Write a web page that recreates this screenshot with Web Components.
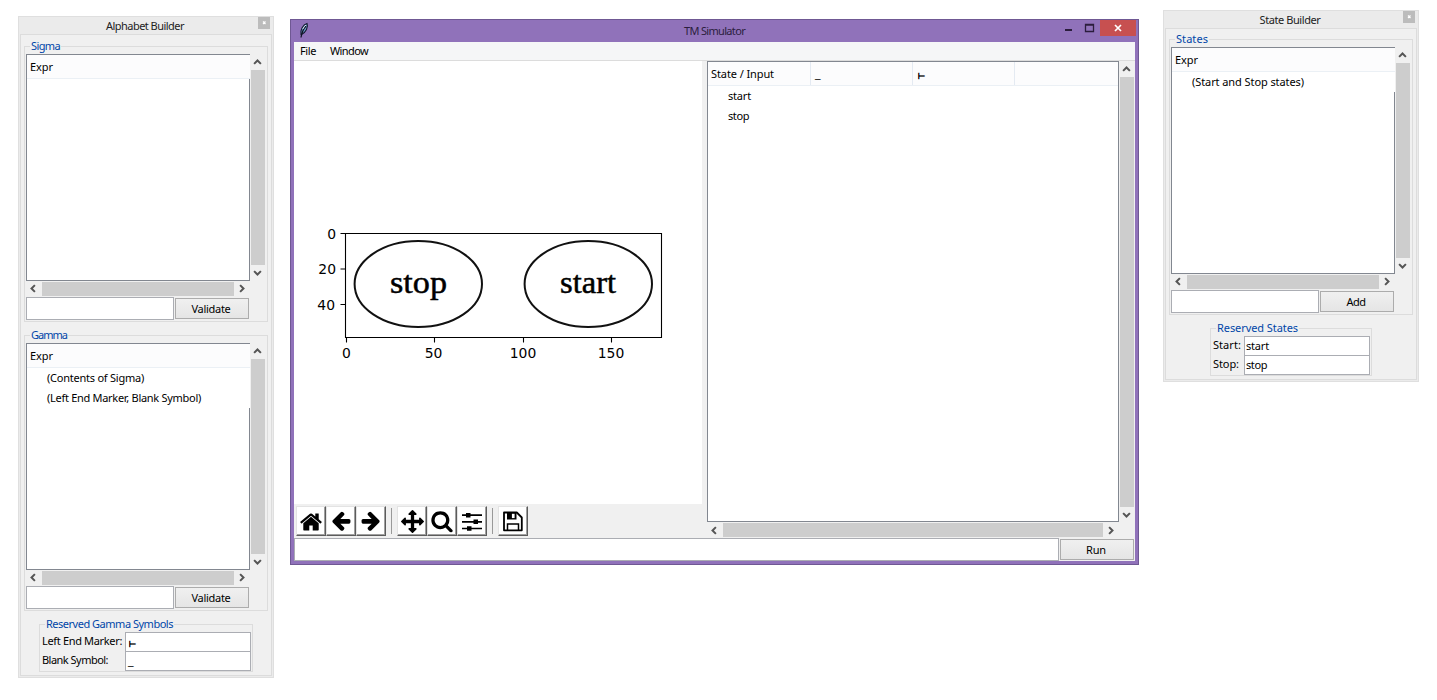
<!DOCTYPE html>
<html lang="en">
<head>
<meta charset="utf-8">
<title>TM Simulator</title>
<style>
html,body{margin:0;padding:0;background:#fff}
body{width:1437px;height:700px;overflow:hidden;font-family:"Noto Sans","DejaVu Sans",sans-serif;font-size:11px;color:#000}
</style>
</head>
<body>
<tm-desktop></tm-desktop>
<script>
const define = (name, html, init) => customElements.define(name, class extends HTMLElement {
  constructor(){ super(); this.attachShadow({mode:'open'}); }
  connectedCallback(){
    this.shadowRoot.innerHTML = typeof html === 'function' ? html(this) : html;
    if (init) init(this);
  }
});
const attr = (el, n, d='') => el.getAttribute(n) ?? d;

/* Label whose tracking is adjusted so that it takes exactly `w` pixels. */
define('fit-text', `<style>:host{display:block;line-height:14px;white-space:pre}span{display:inline-block}</style><span><slot></slot></span>`, el => {
  const s = el.shadowRoot.querySelector('span'), w = +attr(el,'w',0);
  if (w) {
    const n = el.textContent.length;
    s.style.letterSpacing = ((w - s.getBoundingClientRect().width) / n) + 'px';
  }
});

define('scroll-bar', el => {
  const v = attr(el,'dir') === 'v';
  const d = v ? ['M3.1 8.900 6.500 5.500l3.400 3.400','M3.100 6.100 6.500 9.500 9.900 6.100'] : ['M7.900 4.100 4.500 7.500l3.400 3.400','M5.100 4.100 8.500 7.500 5.100 10.900'];
  const a = p => v ? `<svg width="14" height="15" viewBox="0 0 14 15"><path d="${p}" fill="none" stroke="#555" stroke-width="2"/></svg>`
    : `<svg width="16" height="15" viewBox="-1 0 16 15"><path d="${p}" fill="none" stroke="#555" stroke-width="2"/></svg>`;
  return `<style>:host{display:flex;flex-direction:${v?'column':'row'};align-items:${v?'flex-start':'center'};background:#f0f0f0;box-sizing:border-box;${v?'padding:1px 0 0 1px':''}}
  svg{display:block;flex:none}i{flex:1;background:#cdcdcd;${v?'width:14px':'height:14px'}}</style>${a(d[0])}<i></i>${a(d[1])}`;
});

define('text-entry', `<style>:host{display:flex;align-items:center;box-sizing:border-box;background:#fff;border:1px solid #abadb3;padding-left:1px;overflow:hidden}</style><slot></slot>`);
define('push-button', `<style>:host{display:flex;align-items:center;justify-content:center;box-sizing:border-box;border:1px solid #acacac;padding-right:2px;background:linear-gradient(#f0f0f0,#e5e5e5)}</style><slot></slot>`);

define('list-box', `<style>:host{display:flex;flex-direction:column;box-sizing:border-box;background:#fff;border:solid #828790;border-width:1px 0 1px 1px}
.h{height:23px;border-bottom:1px solid #ebf0f5;background:#fcfcfd;display:flex;align-items:center;padding-left:3px}
.f{flex:1;border-right:1px solid #828790}</style><div class="h"><fit-text w="23">Expr</fit-text></div><slot></slot><div class="f"></div>`);
define('list-row', `<style>:host{display:flex;height:20px;align-items:center;padding-left:20px}</style><slot></slot>`);

define('group-box', el => `<style>:host{display:block;box-sizing:border-box;border:1px solid #dcdcdc;position:relative}
.l{position:absolute;left:${attr(el,'lx','5')}px;top:-8px;background:#f0f0f0;padding:0 1px;color:#0046a8}</style>
<fit-text class="l" w="${attr(el,'lw')}">${attr(el,'label')}</fit-text><slot></slot>`);

/* A list with scroll bars and the entry row beneath it. */
define('expr-editor', el => `<style>:host{display:block}
group-box{height:276px;padding:7px 0 0 1px}
.g{display:grid;grid-template-columns:224px 16px;grid-template-rows:227px 16px}
.r{display:flex;gap:1px;align-items:center}
text-entry{width:148px;height:23px}push-button{width:74px;height:21px}
scroll-bar[dir=v]{width:16px;height:226px}
scroll-bar[dir=h]{width:224px;height:15px}</style>
<group-box label="${attr(el,'label')}" lw="${attr(el,'lw')}"><div class="g"><list-box><slot></slot></list-box><scroll-bar dir="v"></scroll-bar><scroll-bar dir="h"></scroll-bar></div>
<div class="r"><text-entry></text-entry><push-button><fit-text w="${attr(el,'bw')}">${attr(el,'button')}</fit-text></push-button></div></group-box>`);

define('tool-window', el => `<style>:host{display:block;box-sizing:border-box;width:256px;background:#ebebeb;border:1px solid #dfdfdf;padding:0 1px 1px;position:relative}
.t{height:${attr(el,'th','17')}px;display:flex;align-items:center;justify-content:center;color:#222;padding-right:2px}
.c{position:absolute;right:3px;top:0;width:12px;height:12px;background:#bcbcbc;display:grid;place-items:center}
.c svg{display:block}
.b{box-sizing:border-box;height:${attr(el,'bh')}px;background:#f0f0f0;border:1px solid #dcdcdc;padding:${attr(el,'pt','11')}px 0 0 3px}</style>
<div class="t"><fit-text w="${attr(el,'tw')}">${attr(el,'name')}</fit-text></div><div class="c"><svg width="12" height="12"><path d="M5 4.500l2.500 2.500m0-2.500l-2.500 2.500" stroke="#fff" stroke-width="1.200"/></svg></div>
<div class="b"><slot></slot></div>`);

define('reserved-field', el => `<style>:host{display:flex;height:19px}
.l{flex:none;width:${attr(el,'lwid')}px;padding-top:2px}.l fit-text{margin-left:-1px}text-entry{width:126px;height:20px}</style>
<div class="l"><fit-text w="${attr(el,'w')}">${attr(el,'label')}</fit-text></div><text-entry><slot></slot></text-entry>`);

/* End-marker and blank glyphs, set smaller and lower than the labels. */
define('left-mark', `<style>:host{display:block;font:8.500px/14px "DejaVu Sans",sans-serif;padding:4px 0 0 2px;-webkit-text-stroke:.5px #000}</style>⊢`);
define('blank-mark', `<style>:host{display:block;line-height:14px;font-family:"DejaVu Sans",sans-serif;padding-left:1px}</style>_`);

const ICONS = {
 home:[24,0,1,'<path d="M1472 992v480q0 26-19 45t-45 19h-384v-384h-256v384h-384q-26 0-45-19t-19-45v-480q0-1 .5-3t.5-3l575-474 575 474q1 2 1 6zm223-69l-62 74q-8 9-21 11h-3q-13 0-21-7l-692-577-692 577q-12 8-24 7-13-2-21-11l-62-74q-8-10-7-23.5t11-21.5l719-599q32-26 76-26t76 26l244 204v-195q0-14 9-23t23-9h192q14 0 23 9t9 23v408l219 182q10 8 11 21.5t-7 23.5z"/>'],
 back:[22,0,-.5,'<path d="M1664 896v128q0 53-32.5 90.5t-84.5 37.5h-704l293 294q38 36 38 90t-38 90l-75 76q-37 37-90 37-52 0-91-37l-651-652q-37-37-37-90 0-52 37-91l651-650q38-38 91-38 52 0 90 38l75 74q38 38 38 91t-38 91l-293 293h704q52 0 84.5 37.5t32.5 90.5z"/>'],
 forward:[22,0,-.5,'<path transform="translate(1792 0) scale(-1 1)" d="M1664 896v128q0 53-32.5 90.5t-84.5 37.5h-704l293 294q38 36 38 90t-38 90l-75 76q-37 37-90 37-52 0-91-37l-651-652q-37-37-37-90 0-52 37-91l651-650q38-38 91-38 52 0 90 38l75 74q38 38 38 91t-38 91l-293 293h704q52 0 84.5 37.5t32.5 90.5z"/>'],
 pan:[23,0,0,'<path d="M1792 896q0 26-19 45l-256 256q-19 19-45 19t-45-19-19-45v-128h-384v384h128q26 0 45 19t19 45-19 45l-256 256q-19 19-45 19t-45-19l-256-256q-19-19-19-45t19-45 45-19h128v-384h-384v128q0 26-19 45t-45 19-45-19l-256-256q-19-19-19-45t19-45l256-256q19-19 45-19t45 19 19 45v128h384v-384h-128q-26 0-45-19t-19-45 19-45l256-256q19-19 45-19t45 19l256 256q19 19 19 45t-19 45-45 19h-128v384h384v-128q0-26 19-45t45-19 45 19l256 256q19 19 19 45z"/>'],
 zoom:[23,-.5,-.5,'<path d="M1216 832q0-185-131.5-316.5t-316.5-131.5-316.5 131.5-131.5 316.5 131.5 316.5 316.5 131.5 316.5-131.5 131.5-316.5zm512 832q0 52-38 90t-90 38q-54 0-90-38l-343-342q-179 124-399 124-143 0-273.5-55.5t-225-150-150-225-55.5-273.5 55.5-273.5 150-225 225-150 273.5-55.5 273.5 55.5 225 150 150 225 55.5 273.5q0 220-124 399l343 343q37 37 37 90z"/>']
};
define('tool-button', el => {
  const k = attr(el,'icon'); let s;
  if (ICONS[k]) { const [z,x,y,p] = ICONS[k]; s = `<svg style="transform:translate(${x}px,${y}px)" width="${z}" height="${z}" viewBox="0 0 1792 1792">${p}</svg>`; }
  else if (k === 'sliders') s = `<svg width="24" height="24" viewBox="0 0 24 24"><path d="M2 6.200h20M2 12.800h20M2 19.500h20" stroke="#000" stroke-width="1.700"/><path d="M6 4h4.500v4.500H6zM13.500 10.500H18V15h-4.500zM7 17.300h4.500v4.500H7z"/></svg>`;
  else s = `<svg width="24" height="24" viewBox="0 0 24 24"><path d="M3 3.500h12.800l5 5v12.800H3z" fill="none" stroke="#000" stroke-width="1.800" stroke-linejoin="round"/><path d="M6 3.500h9.500v7H6z"/><path d="M10.900 4.800h2.700v4.300h-2.700z" fill="#fff"/><path d="M6.500 21v-6h11v6" fill="none" stroke="#000" stroke-width="1.500"/></svg>`;
  return `<style>:host{display:grid;place-items:center;box-sizing:border-box;width:30px;height:30px;background:#fff;border:1px solid;border-color:#e3e3e3 #5c5c5c #5c5c5c #e3e3e3;box-shadow:inset -1px -1px #a0a0a0}svg{display:block}</style>${s}`;
});

define('state-plot', `<style>:host{display:block;background:#fff}svg{display:block}.t{font:13.9px "DejaVu Sans",sans-serif}.s{font:32px "Liberation Serif",serif}</style>
<svg width="408" height="443" viewBox="294 61 408 443">
<path d="M345.500 233.500h316v104h-316zM340.500 233.500h5M340.500 269h5M340.500 304.500h5M346.500 337.500v5M434.500 337.500v5M523.500 337.500v5M611.500 337.500v5" fill="none" stroke="#000" stroke-width="1.1"/>
<g fill="none" stroke="#111" stroke-width="2"><ellipse cx="418.300" cy="284" rx="63.700" ry="43"/><ellipse cx="588.300" cy="284" rx="63.700" ry="43"/></g>
<g class="t" text-anchor="end"><text x="336" y="239">0</text><text x="336" y="274">20</text><text x="335" y="309.500">40</text></g>
<g class="t" text-anchor="middle"><text x="346.500" y="358">0</text><text x="433.500" y="358">50</text><text x="523" y="358">100</text><text x="611" y="358">150</text></g>
<g class="s" stroke="#000" stroke-width=".5"><text x="390" y="293" textLength="57" lengthAdjust="spacingAndGlyphs">stop</text><text x="560" y="293" textLength="56" lengthAdjust="spacingAndGlyphs">start</text></g></svg>`);

define('transition-table', `<style>:host{display:flex;flex-direction:column;box-sizing:border-box;background:#fff;border:1px solid #828790}
.h{height:23px;display:grid;grid-template-columns:103px 102px 102px 1fr;border-bottom:1px solid #ebf0f5;background:#fcfcfd}
.h div{display:flex;align-items:center;border-right:1px solid #e4eaf2;padding-left:3px}.h div:last-child{border:0}</style>
<div class="h"><div><fit-text w="63">State / Input</fit-text></div><div><blank-mark></blank-mark></div><div><left-mark></left-mark></div><div></div></div><slot></slot>`);

define('main-window', `<style>
:host{display:block;box-sizing:border-box;width:849px;height:546px;background:#9072ba;border:1px solid #6f5893;padding:0 3px 3px}
.t{height:22px;display:grid;grid-template-columns:1fr auto 1fr;align-items:center;color:#2b1d3d}
.t>svg{margin-left:4px;display:block}
.w{display:flex;justify-content:flex-end;height:22px;align-items:flex-start;margin-right:-1px}
.x{width:36px;height:16px;background:#c75050;display:grid;place-items:center}
.w svg{display:block}
.m{height:18px;background:#f5f6f7;border-bottom:1px solid #dcdcdc;display:flex;align-items:center;padding-left:6px;gap:14px}
.c{height:477px;display:grid;grid-template-columns:413px 412px 16px;background:#f0f0f0}
state-plot{width:408px;height:443px}
.b{display:flex;padding:2px 0 0 2px}.b i{width:1px;height:26px;background:#999;margin:2px 5px}
.g{height:461px}
scroll-bar[dir=v]{width:15px;height:461px}scroll-bar[dir=h]{height:16px;width:412px}
.r{display:flex;gap:1px;align-items:center;background:#f0f0f0;height:23px}
.r text-entry{width:765px;height:23px}.r push-button{width:74px;height:21px}
</style>
<div class="t"><svg width="12" height="18" viewBox="0 0 12 18"><path d="M3 12.500C2 8 5 2.500 9 1.500 10.500 5 8 10.500 3.500 12.500z" fill="#6f9fce" stroke="#14182c" stroke-width="1.100"/><path d="M8 4Q4 8.500 3 15.500" stroke="#101424" fill="none" stroke-width="1.200"/><path d="M4.800 7Q6 4.500 8 3" stroke="#dbe9f7" fill="none"/></svg>
<fit-text w="61">TM Simulator</fit-text>
<div class="w"><svg width="35" height="16"><path d="M0 10h7" stroke="#2b1d3d" stroke-width="2"/><path d="M20.500 4.500h8v7h-8zM20 5h9" fill="none" stroke="#2b1d3d" stroke-width="1.300"/></svg><div class="x"><svg width="8" height="8"><path d="M1 1l6 6m0-6L1 7" stroke="#fff" stroke-width="1.700"/></svg></div></div></div>
<div class="m"><fit-text w="16">File</fit-text><fit-text w="38">Window</fit-text></div>
<div class="c"><div><state-plot></state-plot><div class="b"><tool-button icon="home"></tool-button><tool-button icon="back"></tool-button><tool-button icon="forward"></tool-button><i></i><tool-button icon="pan"></tool-button><tool-button icon="zoom"></tool-button><tool-button icon="sliders"></tool-button><i></i><tool-button icon="save"></tool-button></div></div>
<div><transition-table class="g"><list-row><fit-text w="23">start</fit-text></list-row><list-row><fit-text w="21">stop</fit-text></list-row></transition-table><scroll-bar dir="h"></scroll-bar></div><scroll-bar dir="v"></scroll-bar></div>
<div class="r"><text-entry></text-entry><push-button><fit-text w="20">Run</fit-text></push-button></div>`);

define('tm-desktop', `<style>
:host{display:block;position:relative;width:1437px;height:700px}
tool-window,main-window{position:absolute}
.a{left:18px;top:16px}.m{left:290px;top:19px}.s{left:1163px;top:10px}
expr-editor{width:244px}
expr-editor+expr-editor{margin-top:13px}
group-box.r{padding:7px 0 0 3px;height:48px}
</style>
<tool-window class="a" name="Alphabet Builder" tw="78" bh="642">
<expr-editor label="Sigma" lw="29" button="Validate" bw="39"></expr-editor>
<expr-editor label="Gamma" lw="36" button="Validate" bw="39"><list-row><fit-text w="97">(Contents of Sigma)</fit-text></list-row><list-row><fit-text w="154">(Left End Marker, Blank Symbol)</fit-text></list-row></expr-editor>
<group-box class="r" style="width:214px;margin:13px 0 0 15px" label="Reserved Gamma Symbols" lw="127">
<reserved-field label="Left End Marker:" w="80" lwid="82"><left-mark></left-mark></reserved-field>
<reserved-field label="Blank Symbol:" w="66" lwid="82"><blank-mark></blank-mark></reserved-field></group-box>
</tool-window>
<main-window class="m"></main-window>
<tool-window class="s" name="State Builder" tw="61" bh="352" pt="10">
<expr-editor label="States" lw="32" button="Add" bw="19"><list-row><fit-text w="112">(Start and Stop states)</fit-text></list-row></expr-editor>
<group-box class="r" style="width:162px;margin:13px 0 0 41px" label="Reserved States" lw="81">
<reserved-field label="Start:" w="28" lwid="30"><fit-text w="23">start</fit-text></reserved-field>
<reserved-field label="Stop:" w="26" lwid="30"><fit-text w="21">stop</fit-text></reserved-field></group-box>
</tool-window>`);
</script>
</body>
</html>
